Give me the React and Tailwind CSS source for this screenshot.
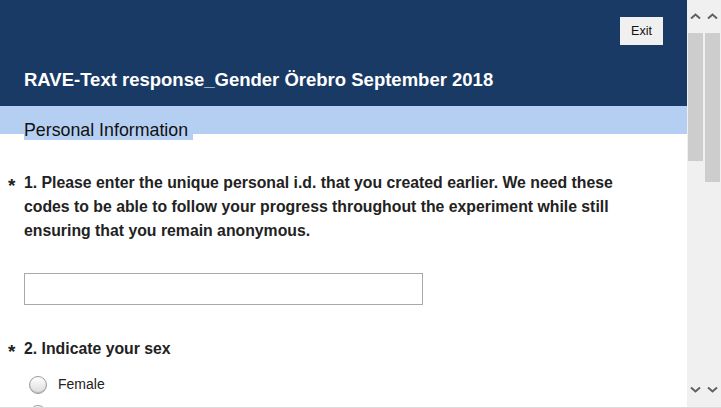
const Chevron = ({ down }) => (
  <svg width="11" height="7" viewBox="0 0 11 7" className="block">
    <path
      d={down ? "M1 1.5 L5.5 5.5 L10 1.5" : "M1 5.5 L5.5 1.5 L10 5.5"}
      fill="none"
      stroke="#606060"
      strokeWidth="2"
    />
  </svg>
);

const ScrollTrack = ({ thumb }) => (
  <div className="flex w-[15px] flex-col">
    <div className="flex h-[33px] items-center justify-center">
      <Chevron />
    </div>
    <div className={`w-full bg-[#cdcdcd] ${thumb}`} />
    <div className="flex-1" />
    <div className="flex h-[30px] items-center justify-center pb-[6px]">
      <Chevron down />
    </div>
  </div>
);

const Radio = ({ label }) => (
  <label className="flex h-[29px] items-center gap-[11px] pl-[29px]">
    <span className="h-[18px] w-[18px] shrink-0 rounded-full border border-[#9a9a9a] bg-gradient-to-b from-white to-[#dcdcdc] shadow-[inset_0_-1px_1px_rgba(0,0,0,0.15)]" />
    <span className="text-[14px] text-[#222]">{label}</span>
  </label>
);

const Question = ({ num, children }) => (
  <div className="flex">
    <span className="w-[24px] shrink-0 pl-[8px] pt-[3px] text-[19px] font-bold leading-[24px] text-[#222]">*</span>
    <p className="w-[605px] text-[15.8px] font-bold leading-[24px] text-[#222]">
      {num}. {children}
    </p>
  </div>
);

export default function App() {
  return (
    <div
      className="flex h-[408px] w-[721px] overflow-hidden border-b border-[#dcdcdc] bg-white"
      style={{ fontFamily: '"Liberation Sans", Arial, sans-serif' }}
    >
      <div className="flex-1 overflow-hidden">
        <div className="flex h-[106px] flex-col bg-[#1a3a66] px-6 pt-[17px]">
          <button className="h-[28px] w-[43px] self-end bg-[#f0f0f0] text-[12.5px] text-[#111]">Exit</button>
          <h1 className="mt-[23px] text-[18.5px] font-bold leading-[24px] text-white">
            RAVE-Text response_Gender Örebro September 2018
          </h1>
        </div>
        <div className="h-[28px] bg-[#b5cff2] px-6">
          <span className="mt-[14px] inline-block bg-[#b5cff2] pr-[5px] text-[17.8px] leading-[20px] text-[#111]">
            Personal Information
          </span>
        </div>

        <div className="mt-[37px]">
          <Question num="1">
            Please enter the unique personal i.d. that you created earlier. We need these codes to be able to
            follow your progress throughout the experiment while still ensuring that you remain anonymous.
          </Question>
          <div className="mt-[30px] px-6">
            <input type="text" className="h-[32px] w-[399px] border border-[#a9a9a9] outline-none" />
          </div>
        </div>

        <div className="mt-[32px]">
          <Question num="2">Indicate your sex</Question>
          <div className="mt-[6px]">
            <Radio label="Female" />
            <Radio label="Male" />
          </div>
        </div>
      </div>

      <div className="flex w-[34px] shrink-0 gap-[2px] bg-[#f0f0f0] pl-[1px]">
        <ScrollTrack thumb="h-[128px]" />
        <ScrollTrack thumb="h-[149px]" />
      </div>
    </div>
  );
}
